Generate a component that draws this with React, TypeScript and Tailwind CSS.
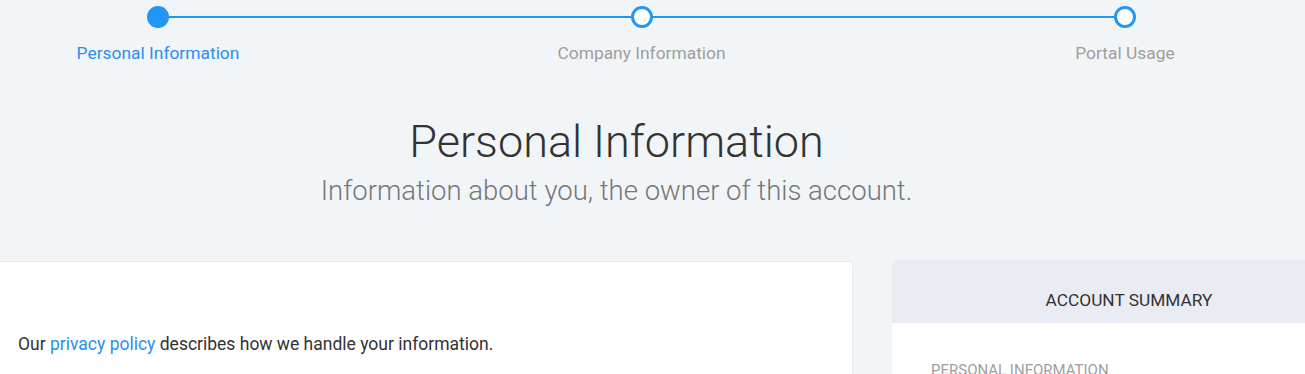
import React from "react";

const steps = [
  { label: "Personal Information", done: true },
  { label: "Company Information", done: false },
  { label: "Portal Usage", done: false },
];

const App = () => {
  return (
    <div className="h-[374px] w-full overflow-hidden bg-[#f1f5f8] font-['Roboto',sans-serif]">
      {/* Stepper */}
      <div className="relative pl-[58px] pr-[80px] pt-[6px]">
        <div className="absolute left-[158px] right-[180px] top-[16px] h-[2px] bg-[#2196f3]"></div>
        <div className="flex justify-between">
          {steps.map((step) => (
            <div key={step.label} className="relative flex w-[200px] flex-col items-center">
              <div
                className={
                  step.done
                    ? "h-[22px] w-[22px] rounded-full bg-[#2196f3]"
                    : "h-[22px] w-[22px] rounded-full border-[3px] border-[#2196f3] bg-white"
                }
              ></div>
              <span
                className={
                  step.done
                    ? "mt-[15px] text-[17.4px] leading-[20px] text-[#2b8ef0]"
                    : "mt-[15px] text-[17.4px] leading-[20px] text-[#9e9e9e]"
                }
              >
                {step.label}
              </span>
            </div>
          ))}
        </div>
      </div>

      {/* Heading */}
      <div className="mr-[72px] mt-[54px] flex flex-col items-center text-center">
        <h1 className="text-[45px] font-light leading-[50px] text-[#333333]">Personal Information</h1>
        <p className="mt-[7px] text-[27.5px] font-light leading-[34px] text-[#777777]">
          Information about you, the owner of this account.
        </p>
      </div>

      {/* Cards */}
      <div className="mt-[53px] flex items-start gap-[39px]">
        <div className="h-[140px] w-[853px] shrink-0 rounded-r-[5px] border border-l-0 border-[#e6ebf0] bg-white px-[18px] pt-[70px]">
          <p className="text-[17.5px] leading-[24px] text-[#333333]">
            Our <a className="text-[#2b8ef0]">privacy policy</a> describes how we handle your information.
          </p>
        </div>
        <div className="mt-[-1px] w-[474px] shrink-0 overflow-hidden rounded-t-[5px] bg-white">
          <div className="h-[63px] bg-[#e9ecf3] pt-[29px] text-center">
            <span className="text-[17.3px] uppercase leading-[22px] text-[#333333]">Account Summary</span>
          </div>
          <div className="px-[39px] pt-[35px]">
            <span className="text-[15px] uppercase leading-[20px] text-[#9e9e9e]">Personal Information</span>
          </div>
        </div>
      </div>
    </div>
  );
};

export default App;
